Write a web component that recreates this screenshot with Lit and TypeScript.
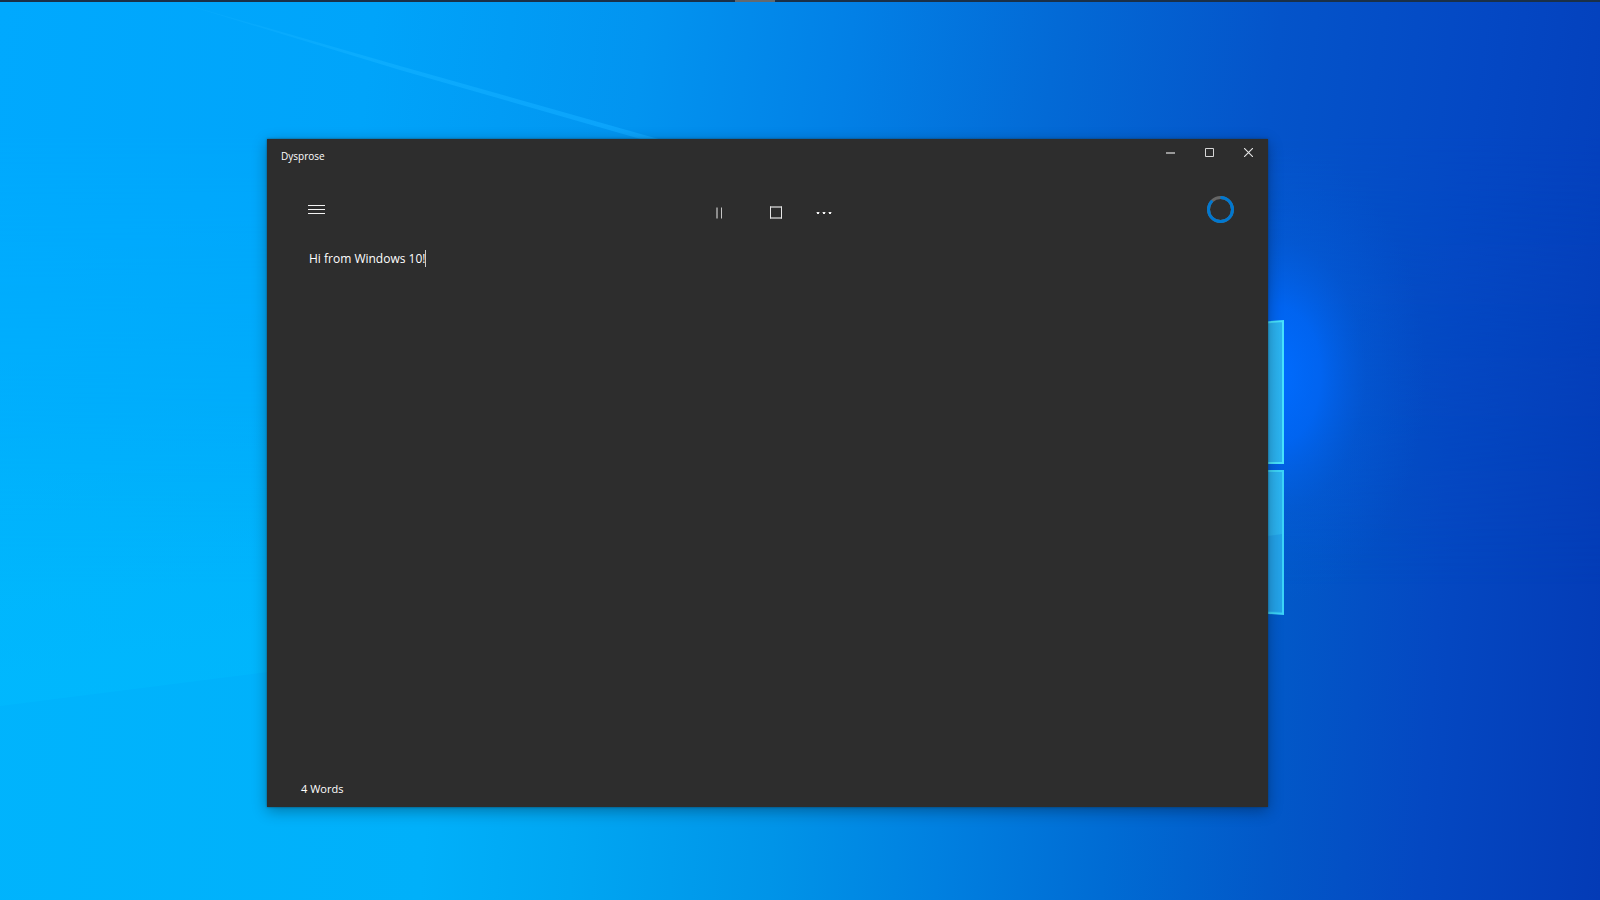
import { LitElement, html, css, svg } from "lit";
import { customElement, state, property } from "lit/decorators.js";

const icons = {
  menu: svg`<svg width="17" height="9" viewBox="0 0 17 9" shape-rendering="crispEdges"><path d="M0 .5h17M0 4.5h17M0 8.5h17" stroke="#f2f2f2" /></svg>`,
  pause: svg`<svg width="7" height="12" viewBox="0 0 7 12"><path d="M1 .5v11" stroke="#8c8c8c" stroke-width="2" /><path d="M5.5 .5v11" stroke="#c4c4c4" /></svg>`,
  stop: svg`<svg width="12" height="13" viewBox="0 0 12 13"><path d="M0 1h12M0 12h12" stroke="#999" stroke-width="2" /><path d="M.5 0.5v12M11.5 .5v12" stroke="#e6e6e6" /></svg>`,
  more: svg`<svg width="16" height="2" viewBox="0 0 16 2"><path d="M1 0h2v2h-2zM7 0h2v2h-2zM13 0h2v2h-2z" fill="#f4f4f4" /><path d="M0 .5h1M6 .5h1M12 .5h1M3 .5h1M9 .5h1M15 .5h1" stroke="#777" /></svg>`,
  minimize: svg`<svg width="9" height="9" viewBox="0 0 9 9"><path d="M0 5h9" stroke="#999" stroke-width="2" /></svg>`,
  maximize: svg`<svg width="9" height="9" viewBox="0 0 9 9"><path d="M.5 .5h8v8h-8z" fill="none" stroke="#d6d6d6" /></svg>`,
  close: svg`<svg width="9" height="9" viewBox="0 0 9 9"><path d="M0 0l9 9M9 0l-9 9" fill="none" stroke="#e6e6e6" stroke-width="1.1" /></svg>`,
};

@customElement("desktop-wallpaper")
class DesktopWallpaper extends LitElement {
  static styles = css`
    :host {
      display: block;
      position: relative;
      height: 100%;
      background: linear-gradient(94deg, #00b4fd 0%, #00b0fa 29%, #00a6f2 38%, #0094e8 50%, #0080e0 60%, #006cd4 70%, #0258c8 80%, #0448c2 89%, #043bb6 100%);
    }
    .sky {
      position: absolute;
      inset: 0;
      background: linear-gradient(97deg, #00a9fe 0%, #00a4fa 22%, #0294f0 38%, #0280e6 50%, #036ad6 62%, #0454ca 75%, #0448c4 87%, #043cb8 100%);
      mask-image: linear-gradient(#000 15%, transparent 65%);
    }
    .art {
      position: absolute;
      inset: 0;
      width: 100%;
      height: 100%;
    }
  `;
  render() {
    return html`
      <div class="sky"></div>
      <svg class="art" viewBox="0 0 1600 900" preserveAspectRatio="none" aria-hidden="true">
        <defs>
          <radialGradient id="halo">
            <stop offset="0" stop-color="#006cff" />
            <stop offset=".3" stop-color="#0068fa" stop-opacity=".8" />
            <stop offset=".6" stop-color="#0460e4" stop-opacity=".3" />
            <stop offset="1" stop-color="#045cdc" stop-opacity="0" />
          </radialGradient>
          <linearGradient id="ray" x1="0" x2="1">
            <stop offset="0" stop-color="#10b0ff" stop-opacity=".2" />
            <stop offset=".4" stop-color="#10b0ff" stop-opacity=".7" />
            <stop offset="1" stop-color="#10a8ff" stop-opacity=".7" />
          </linearGradient>
          <linearGradient id="beam" x1="0" x2="0" y1="0" y2="1">
            <stop offset="0" stop-color="#00beff" stop-opacity="0" />
            <stop offset="1" stop-color="#00beff" stop-opacity=".4" />
          </linearGradient>
          <linearGradient id="pane" x1="0" x2="1">
            <stop offset="0" stop-color="#1c9ae6" />
            <stop offset="1" stop-color="#2cb4f0" />
          </linearGradient>
        </defs>
        <ellipse cx="1276" cy="375" rx="150" ry="230" fill="url(#halo)" />
        <path d="M170 0L400 66L662 140L644 140L400 70Z" fill="url(#ray)" />
        <path d="M0 440L267 410V672L0 706Z" fill="url(#beam)" />
        <path d="M1200 328L1283 321V463H1200Z" fill="url(#pane)" stroke="#48e2fc" stroke-width="2" />
        <path d="M1200 471H1283V614L1200 608Z" fill="url(#pane)" stroke="#3cd4f8" stroke-width="2" />
        <path d="M1268 536L1282 534V612L1268 611Z" fill="#1a8ce0" opacity=".4" />
      </svg>
    `;
  }
}

@customElement("session-ring")
class SessionRing extends LitElement {
  @property({ type: Number }) value = 88;
  static styles = css`
    :host {
      display: block;
    }
    .ring {
      display: block;
    }
  `;
  render() {
    return html`
      <svg class="ring" width="27" height="27" viewBox="0 0 27 27" role="progressbar" aria-label="Session progress"
        aria-valuemin="0" aria-valuemax="100" aria-valuenow=${this.value}>
        <circle cx="13.5" cy="13.5" r="12" fill="none" stroke="#666" stroke-width="3" />
        <circle cx="13.5" cy="13.5" r="12" fill="none" stroke="#0078d0" stroke-width="3" pathLength="100"
          stroke-dasharray="${this.value} 100" transform="rotate(-90 13.5 13.5)" />
      </svg>
    `;
  }
}

@customElement("editor-window")
class EditorWindow extends LitElement {
  @state() private text = "Hi from Windows 10!";

  static styles = css`
    :host {
      display: flex;
      flex-direction: column;
      background: #2d2d2d;
      color: #fff;
      font-family: "Open Sans", "Noto Sans", sans-serif;
      box-shadow: 0 0 2px rgba(20, 50, 70, 0.7), 0 4px 14px rgba(0, 0, 0, 0.32);
    }
    button {
      display: flex;
      align-items: center;
      justify-content: center;
      padding: 0;
      border: 0;
      background: none;
      color: inherit;
    }
    button:hover {
      background: #444;
    }
    .titlebar {
      display: flex;
      justify-content: space-between;
      height: 36px;
      padding-left: 14px;
    }
    .title {
      margin: 0;
      font-size: 10px;
      font-weight: 400;
      line-height: 34px;
    }
    .caption {
      display: flex;
    }
    .caption button {
      width: 39px;
      height: 27px;
    }
    .toolbar {
      display: grid;
      grid-template-columns: 1fr auto 1fr;
      align-items: center;
      height: 68px;
      padding: 0 34px 0 33px;
    }
    .menu {
      width: 33px;
      height: 32px;
    }
    .commands {
      display: flex;
      padding-top: 7px;
    }
    .commands button {
      width: 57px;
      height: 40px;
    }
    .commands .more {
      width: 39px;
    }
    .progress {
      justify-self: end;
    }
    .editor {
      flex: 1;
      display: flex;
      align-items: flex-start;
      padding: 7px 42px;
      cursor: text;
    }
    .text {
      field-sizing: content;
      height: 18px;
      padding: 0;
      border: 0;
      outline: 0;
      resize: none;
      overflow: hidden;
      white-space: pre;
      background: none;
      color: inherit;
      font-family: inherit;
      font-size: 12px;
      line-height: 18px;
      caret-color: transparent;
    }
    .caret {
      width: 1px;
      height: 17px;
      background: #c8c8c8;
    }
    .status {
      padding: 0 34px 9px;
      font-size: 11px;
      line-height: 18px;
    }
  `;

  private get words() {
    return this.text.split(/\s+/).filter(Boolean).length;
  }

  render() {
    return html`
      <header class="titlebar">
        <h1 class="title">Dysprose</h1>
        <div class="caption">
          <button aria-label="Minimize">${icons.minimize}</button>
          <button aria-label="Maximize">${icons.maximize}</button>
          <button aria-label="Close">${icons.close}</button>
        </div>
      </header>
      <nav class="toolbar">
        <button class="menu" aria-label="Menu">${icons.menu}</button>
        <div class="commands">
          <button aria-label="Pause">${icons.pause}</button>
          <button aria-label="Stop">${icons.stop}</button>
          <button class="more" aria-label="More">${icons.more}</button>
        </div>
        <session-ring class="progress"></session-ring>
      </nav>
      <label class="editor">
        <textarea class="text" aria-label="Document" rows="1" spellcheck="false" .value=${this.text}
          @input=${(e: Event) => (this.text = (e.target as HTMLTextAreaElement).value)}></textarea>
        <span class="caret"></span>
      </label>
      <footer class="status">${this.words} Words</footer>
    `;
  }
}

@customElement("app-root")
class AppRoot extends LitElement {
  static styles = css`
    :host {
      display: block;
      position: relative;
      height: 100vh;
      overflow: hidden;
    }
    .edge {
      position: absolute;
      inset: 0 0 auto;
      display: flex;
      justify-content: center;
      height: 2px;
      padding-right: 90px;
      background: #1a3048;
    }
    .handle {
      width: 40px;
      background: #636a70;
    }
    .window {
      position: absolute;
      inset: 139px 332px 93px 267px;
    }
  `;
  render() {
    return html`
      <desktop-wallpaper></desktop-wallpaper>
      <div class="edge"><span class="handle"></span></div>
      <editor-window class="window"></editor-window>
    `;
  }
}
